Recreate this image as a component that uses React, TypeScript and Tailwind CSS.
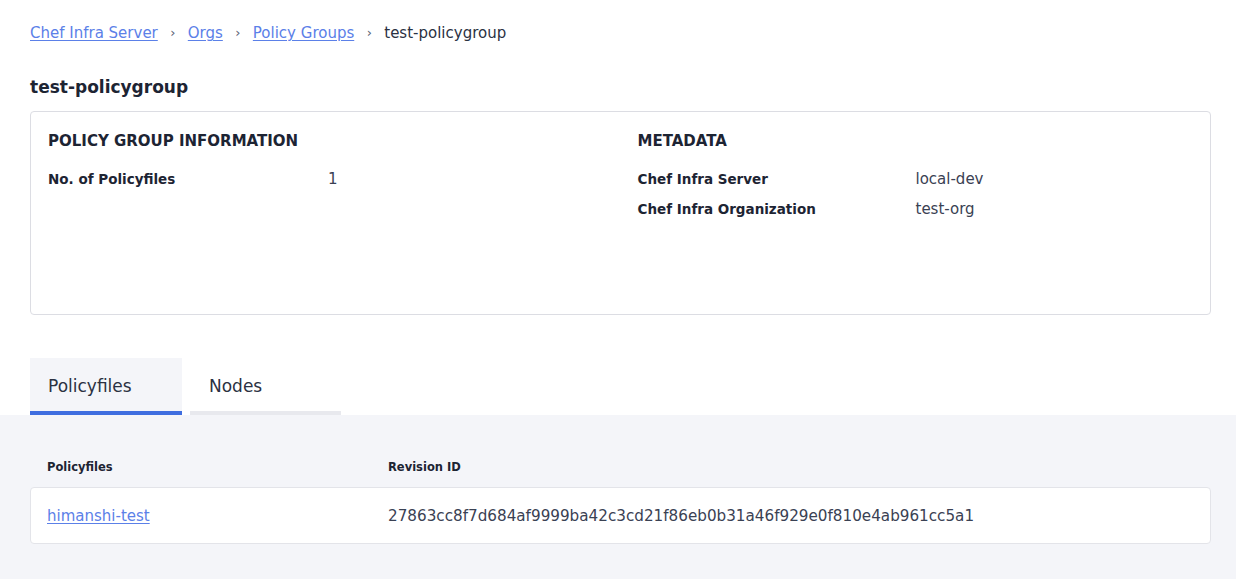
import React from 'react';

const font = { fontFamily: '"DejaVu Sans", "Open Sans", sans-serif' };

const Crumb = ({ label }: { label: string }) => (
  <a href="#" className="text-[#5b80e8] underline underline-offset-2 decoration-1">
    {label}
  </a>
);

const Sep = () => <span className="w-[30px] text-center text-[#5a6072] text-[13px]">›</span>;

export default function App() {
  return (
    <div className="min-h-[579px] w-[1236px] bg-white text-[#1d2433] flex flex-col" style={font}>
      {/* Header */}
      <div className="pl-[30px] pr-[25px] pt-[23px]">
        <nav className="flex items-center text-[15px] leading-[20px]">
          <Crumb label="Chef Infra Server" />
          <Sep />
          <Crumb label="Orgs" />
          <Sep />
          <Crumb label="Policy Groups" />
          <Sep />
          <span className="text-[#2b3142]">test-policygroup</span>
        </nav>

        <h1 className="mt-[32px] text-[17px] leading-[24px] font-bold">test-policygroup</h1>

        {/* Info card */}
        <div className="mt-3 h-[204px] rounded-[4px] border border-[#dcdde3] grid grid-cols-2">
          <div className="pl-[17px] pt-[18px]">
            <h2 className="text-[15px] leading-[22px] font-bold uppercase">Policy Group Information</h2>
            <div className="mt-[17px] flex items-baseline leading-[20px]">
              <span className="w-[280px] text-[13.5px] font-bold">No. of Policyfiles</span>
              <span className="text-[15px] text-[#3a4153]">1</span>
            </div>
          </div>
          <div className="pl-[17px] pt-[18px]">
            <h2 className="text-[15px] leading-[22px] font-bold uppercase">Metadata</h2>
            <div className="mt-[17px] flex items-baseline leading-[20px]">
              <span className="w-[278px] text-[13.5px] font-bold">Chef Infra Server</span>
              <span className="text-[15px] text-[#3a4153]">local-dev</span>
            </div>
            <div className="mt-[10px] flex items-baseline leading-[20px]">
              <span className="w-[278px] text-[13.5px] font-bold">Chef Infra Organization</span>
              <span className="text-[15px] text-[#3a4153]">test-org</span>
            </div>
          </div>
        </div>

        {/* Tabs */}
        <div className="mt-[43px] flex gap-2">
          <div className="w-[152px]">
            <div className="h-[53px] bg-[#f4f5f9] flex items-center pl-[18px] pt-[4px] text-[17px] text-[#2b3142]">Policyfiles</div>
            <div className="h-[4px] bg-[#3f6ee0]" />
          </div>
          <div className="w-[151px]">
            <div className="h-[53px] flex items-center pl-[19px] pt-[4px] text-[17px] text-[#2b3142]">Nodes</div>
            <div className="h-[4px] bg-[#e8e9ee]" />
          </div>
        </div>
      </div>

      {/* Table area */}
      <div className="flex-1 bg-[#f4f5f9] pl-[30px] pr-[25px] pt-[43px]">
        <div className="flex text-[11.5px] leading-[18px] font-bold text-[#1d2433]">
          <span className="w-[358px] pl-[17px]">Policyfiles</span>
          <span>Revision ID</span>
        </div>
        <div className="mt-[11px] h-[57px] bg-white rounded-[4px] border border-[#e3e4e9] flex items-center pt-[2px] text-[15px]">
          <a href="#" className="w-[357px] pl-[16px] text-[#5b80e8] underline underline-offset-2">himanshi-test</a>
          <span className="text-[15.2px] text-[#3a4153]">27863cc8f7d684af9999ba42c3cd21f86eb0b31a46f929e0f810e4ab961cc5a1</span>
        </div>
      </div>
    </div>
  );
}
